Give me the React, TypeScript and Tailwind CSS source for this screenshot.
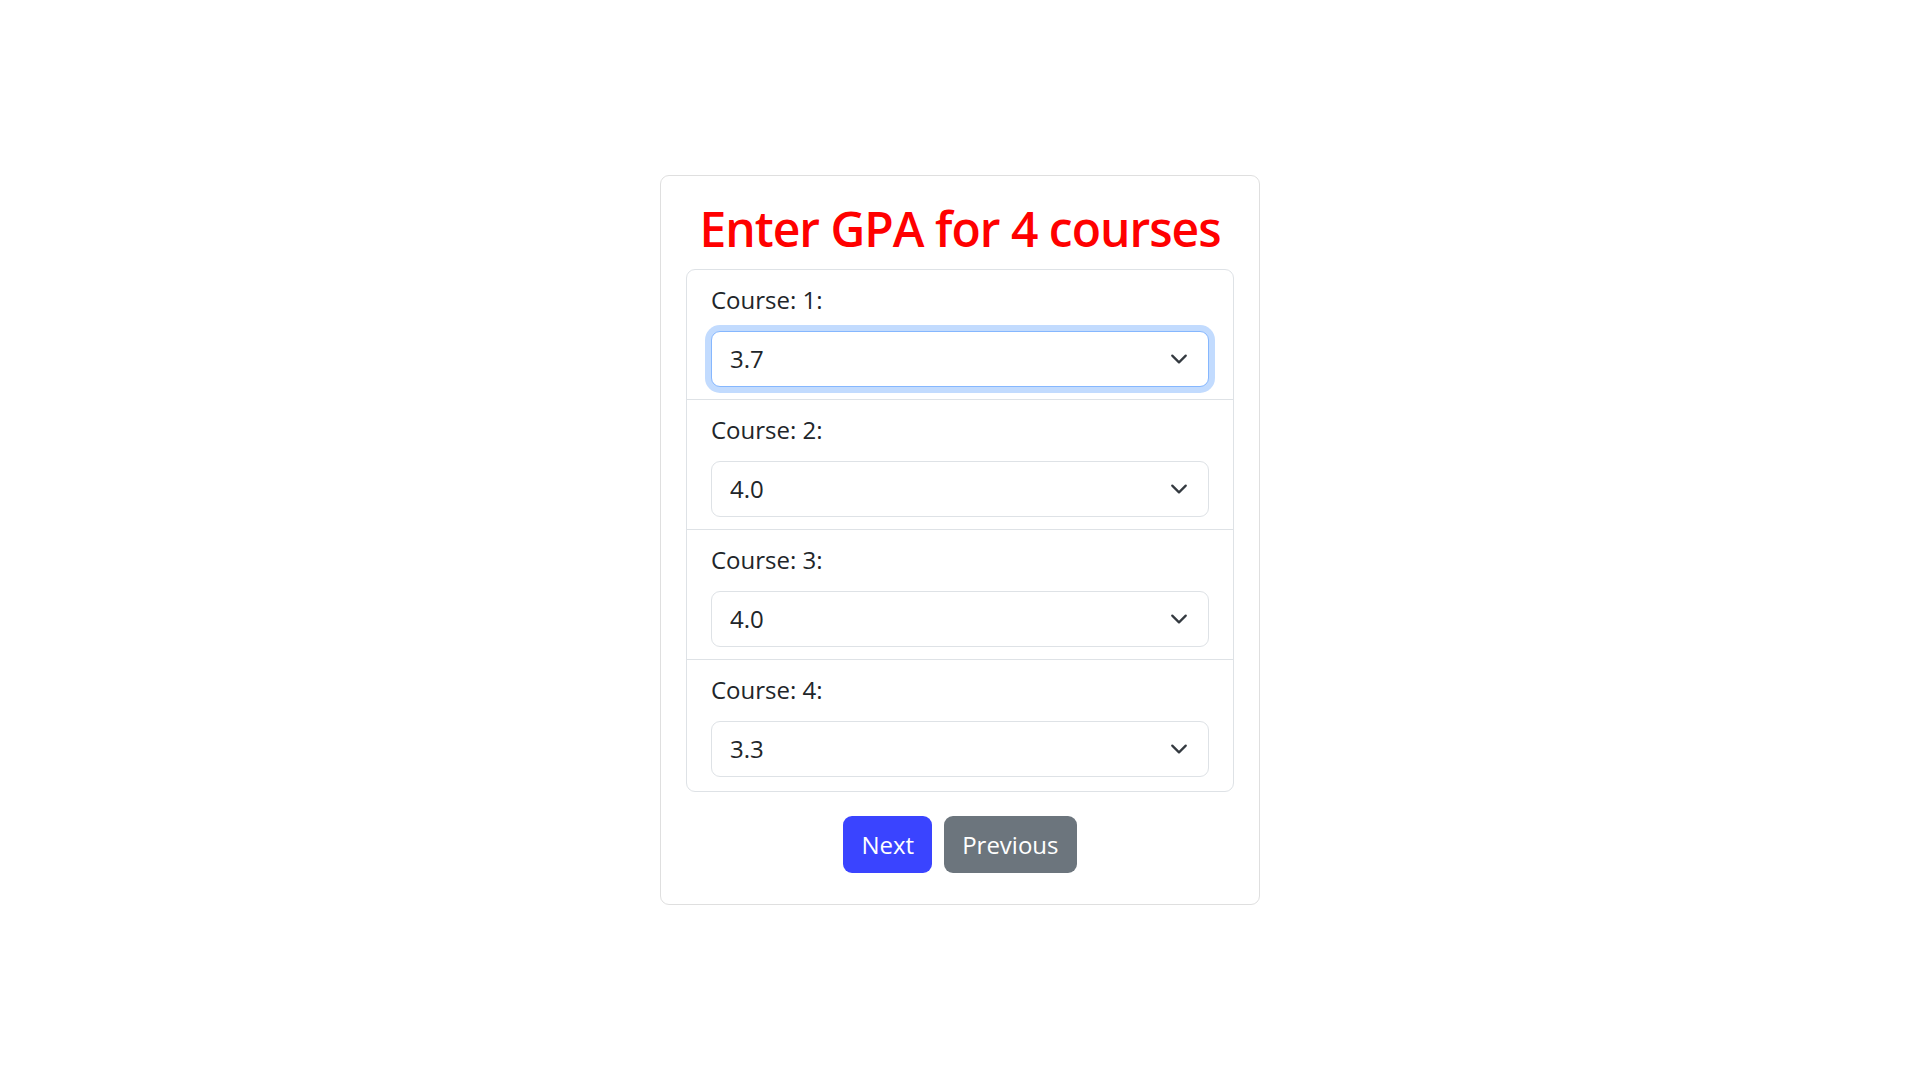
import { useState } from "react";

const grades = ["4.0", "3.7", "3.3", "3.0", "2.7", "2.3", "2.0", "1.7", "1.3", "1.0", "0.0"];

function Chevron() {
    return (
        <svg
            className="pointer-events-none absolute right-[21px] top-1/2 -translate-y-1/2"
            width="18"
            height="18"
            viewBox="0 0 16 16"
            fill="none"
            stroke="#343a40"
            strokeWidth="2"
            strokeLinecap="round"
            strokeLinejoin="round"
        >
            <path d="m2 5 6 6 6-6" />
        </svg>
    );
}

function CourseRow({ index, value, focused, onChange, last }: { index: number; value: string; focused?: boolean; onChange: (v: string) => void; last?: boolean }) {
    return (
        <li className={"px-[24px] pt-[12px] " + (last ? "pb-[14px]" : "pb-[12px] border-b border-[#dee2e6]")}>
            <label className="block mb-[13px] leading-[36px]">Course: {index}:</label>
            <div className="relative">
                <select
                    value={value}
                    onChange={(e) => onChange(e.target.value)}
                    className={
                        "block w-full h-[56px] appearance-none rounded-[9px] bg-white pl-[18px] pr-[54px] text-[24px] leading-[36px] text-[#212529] outline-none border " +
                        (focused ? "border-[#86b7fe] shadow-[0_0_0_6px_rgba(13,110,253,0.25)]" : "border-[#dee2e6]")
                    }
                >
                    {grades.map((g) => (
                        <option key={g} value={g}>{g}</option>
                    ))}
                </select>
                <Chevron />
            </div>
        </li>
    );
}

export default function App() {
    const [values, setValues] = useState(["3.7", "4.0", "4.0", "3.3"]);

    const update = (i: number, v: string) => {
        const next = [...values];
        next[i] = v;
        setValues(next);
    };

    return (
        <div className="min-h-screen flex items-center justify-center bg-white text-[24px] leading-[36px] text-[#212529] font-['Open_Sans',sans-serif]">
            <div className="w-[600px] rounded-[9px] border border-[#dfdfdf] px-[25px] pt-[24px] pb-[31px]">
                <h2 className="text-center text-[48px] leading-[57.6px] font-semibold tracking-[-1px] text-[#ff0000] mb-[12px]">
                    Enter GPA for 4 courses
                </h2>
                <ul className="rounded-[9px] border border-[#dee2e6]">
                    {values.map((v, i) => (
                        <CourseRow
                            key={i}
                            index={i + 1}
                            value={v}
                            focused={i === 0}
                            last={i === values.length - 1}
                            onChange={(nv) => update(i, nv)}
                        />
                    ))}
                </ul>
                <div className="flex justify-center gap-[12px] mt-[24px]">
                    <button className="h-[57px] rounded-[9px] bg-[#3a44ff] px-[18px] text-white">Next</button>
                    <button className="h-[57px] rounded-[9px] bg-[#6c757d] px-[18px] text-white">Previous</button>
                </div>
            </div>
        </div>
    );
}
